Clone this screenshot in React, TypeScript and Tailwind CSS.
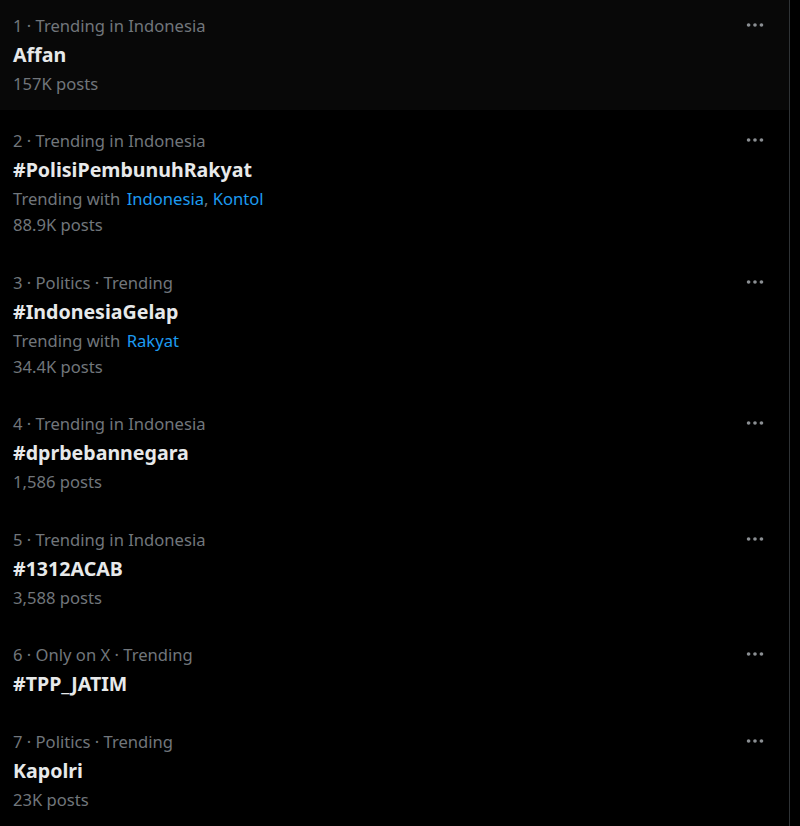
import React from 'react';

type Trend = {
  rank: number;
  context: string;
  name: string;
  with?: string[];
  posts?: string;
};

const trends: Trend[] = [
  { rank: 1, context: 'Trending in Indonesia', name: 'Affan', posts: '157K posts' },
  {
    rank: 2,
    context: 'Trending in Indonesia',
    name: '#PolisiPembunuhRakyat',
    with: ['Indonesia', 'Kontol'],
    posts: '88.9K posts',
  },
  { rank: 3, context: 'Politics · Trending', name: '#IndonesiaGelap', with: ['Rakyat'], posts: '34.4K posts' },
  { rank: 4, context: 'Trending in Indonesia', name: '#dprbebannegara', posts: '1,586 posts' },
  { rank: 5, context: 'Trending in Indonesia', name: '#1312ACAB', posts: '3,588 posts' },
  { rank: 6, context: 'Only on X · Trending', name: '#TPP_JATIM' },
  { rank: 7, context: 'Politics · Trending', name: 'Kapolri', posts: '23K posts' },
];

function MoreIcon() {
  return (
    <svg viewBox="0 0 24 24" className="w-[22px] h-[22px]" fill="#8b8f93">
      <circle cx="5" cy="12" r="2" />
      <circle cx="12" cy="12" r="2" />
      <circle cx="19" cy="12" r="2" />
    </svg>
  );
}

function TrendRow({ trend, hovered }: { trend: Trend; hovered?: boolean }) {
  return (
    <div
      className={`relative px-[13px] pb-[12.5px] ${hovered ? 'bg-[#080808] pt-[10.5px]' : 'pt-[16px]'}`}
    >
      <div className="h-[29px] leading-[29px] text-[16.6px] text-[#71767b]">
        {trend.rank} · {trend.context}
      </div>
      <div className="h-[29px] leading-[29px] text-[19.6px] font-bold text-[#e7e9ea]">{trend.name}</div>
      {trend.with && (
        <div className="h-[26px] leading-[29px] text-[16.6px] text-[#71767b]">
          Trending with{' '}
          {trend.with.map((w, i) => (
            <React.Fragment key={w}>
              {i > 0 && <span>, </span>}
              <span className={`text-[#1d9bf0] ${i === 0 ? 'ml-[2px]' : ''}`}>{w}</span>
            </React.Fragment>
          ))}
        </div>
      )}
      {trend.posts && (
        <div className="h-[29px] leading-[29px] text-[16.6px] text-[#71767b]">{trend.posts}</div>
      )}
      <div className={`absolute left-[744px] ${hovered ? 'top-[13.5px]' : 'top-[19px]'}`}>
        <MoreIcon />
      </div>
    </div>
  );
}

export default function App() {
  return (
    <div
      className="w-[800px] h-[826px] bg-black overflow-hidden flex"
      style={{ fontFamily: '"Noto Sans", "Open Sans", sans-serif' }}
    >
      <div className="w-[790px] border-r border-[#2f3336] flex flex-col">
        {trends.map((t, i) => (
          <TrendRow key={t.rank} trend={t} hovered={i === 0} />
        ))}
      </div>
    </div>
  );
}
